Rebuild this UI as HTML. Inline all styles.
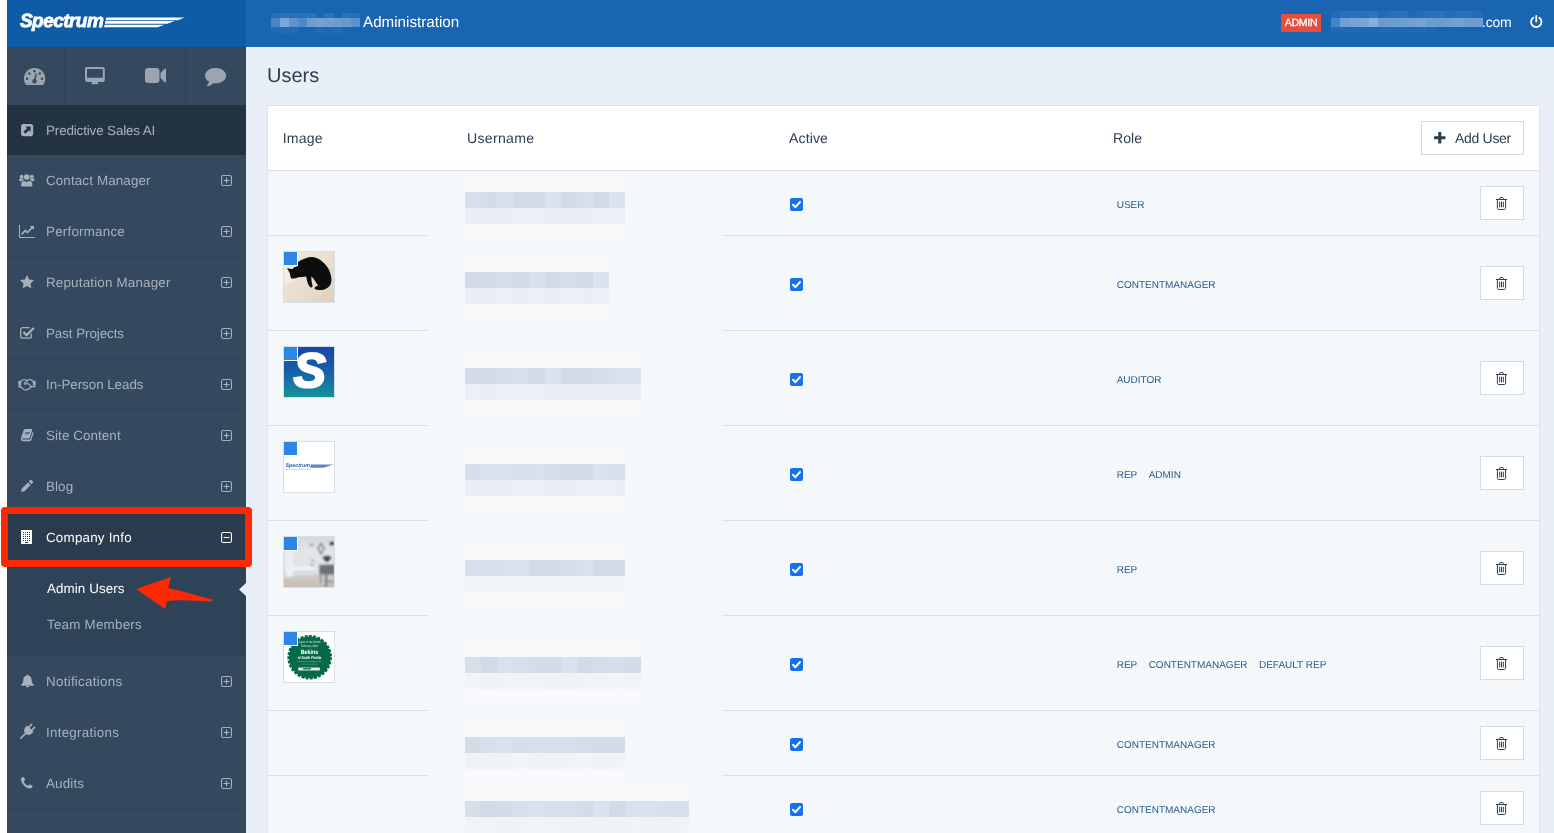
<!DOCTYPE html>
<html lang="en">
<head>
<meta charset="utf-8">
<title>Administration - Users</title>
<style>
*{box-sizing:border-box;margin:0;padding:0}
html,body{width:1554px;height:833px;overflow:hidden;background:#e9eff6}
body{position:relative;font-family:"Liberation Sans","DejaVu Sans",sans-serif;color:#2c3e50;font-size:14px;text-rendering:geometricPrecision}
.abs,.abs *{position:absolute}
body>.abs{will-change:transform}
svg{display:block;overflow:visible}
#strip{left:0;top:0;width:7px;height:833px;background:#fff}
#logo{left:7px;top:0;width:239px;height:47px;background:#0f5ba6}
#logo .w{left:13px;top:10.600px;font-size:19px;line-height:22px;font-weight:bold;font-style:italic;color:#fff;letter-spacing:-0.55px;-webkit-text-stroke:0.8px #fff}
#topbar{left:246px;top:0;width:1308px;height:47px;background:#1a65b1;color:#fff}
#topbar .title{left:117px;top:13.200px;font-size:15.2px;line-height:20px;color:#fff;white-space:nowrap}
#topbar .badge{left:1035px;top:14px;width:40px;height:18px;background:#e74c3c;color:#fff;font-size:10.5px;line-height:18px;text-align:center;letter-spacing:-0.3px;-webkit-text-stroke:.3px #fff}
#topbar .com{left:1236px;top:11.600px;font-size:14px;letter-spacing:-.2px;line-height:20px}
#side{left:7px;top:47px;width:239px;height:786px;background:#34495e}
#side .sep{top:0;width:1px;height:58px;background:#2f4256}
#psai{left:0;top:58px;width:239px;height:50px;background:#243342}
.mi{left:0;width:239px;height:51px;border-bottom:1px solid #2f4357;color:#a7b1bb;font-size:13.4px}
.mi .lbl,#psai .lbl{left:39px;top:17px;line-height:18px;white-space:nowrap;font-size:13.4px;color:#a7b1bb}
#subm{left:0;top:516px;width:239px;height:93px;background:#2f4358}
.sub{left:40px;color:#a7b1bb;font-size:13.4px;line-height:18px;white-space:nowrap}
#h1{left:267px;top:62.500px;font-size:20px;line-height:26px;color:#2c3e50}
#card{left:267px;top:105px;width:1273px;height:740px;background:#f4f8fb;border:1px solid #dbe3ea}
#thead{left:0;top:0;width:1271px;height:65px;background:#fff;border-bottom:1px solid #d5dee6}
.th{top:23px;font-size:14.100px;line-height:18px;color:#2c3e50;white-space:nowrap}
.row{left:0;width:1271px;border-bottom:1px solid #d9e2ea}
.role{left:848.700px;font-size:10px;line-height:14px;color:#285a8c;white-space:nowrap}
.abs .role span{position:static;margin-right:11.400px}
.del{left:1212px;width:44px;height:34px;background:#fff;border:1px solid #d3dce5}
.cb{left:522px;width:13px;height:13px;background:#1670ef;border-radius:2px}
.av{left:15px;width:52px;height:52px;border:1px solid #d7dfe6;background:#fff;overflow:hidden}
.av .sq{left:0px;top:0px;width:13px;height:13px;background:#2e86e4;border-right:1px solid #fff;border-bottom:1px solid #fff;width:14px;height:14px}
</style>
</head>
<body>
<div id="strip" class="abs"></div>
<div id="logo" class="abs"><div class="w">Spectrum</div><svg width="239" height="47" viewBox="0 0 239 47" style="left:0;top:0"><g fill="#fff"><path d="M99.300 17.600h78.200l-6.500 2.600H98.700z"/><path d="M98.500 20.900h69l-7 2.900H97.800z"/><path d="M97.700 24.800h59.800l-7 2.500H97.100z"/></g></svg></div>
<div id="topbar" class="abs"><div style="left:24.90px;top:18.100px;width:9.23px;height:9px;background:#4a86c6"></div><div style="left:24.90px;top:13.2px;width:9.23px;height:4.9px;background:#2570ba"></div><div style="left:24.90px;top:27.100px;width:9.23px;height:6.400px;background:#2169b5"></div><div style="left:33.83px;top:18.100px;width:9.23px;height:9px;background:#7ba7d6"></div><div style="left:33.83px;top:13.2px;width:9.23px;height:4.9px;background:#2872bb"></div><div style="left:33.83px;top:27.100px;width:9.23px;height:6.400px;background:#226bb6"></div><div style="left:42.76px;top:18.100px;width:9.23px;height:9px;background:#5e93cc"></div><div style="left:42.76px;top:13.2px;width:9.23px;height:4.9px;background:#2771bb"></div><div style="left:42.76px;top:27.100px;width:9.23px;height:6.400px;background:#216ab5"></div><div style="left:51.69px;top:18.100px;width:9.23px;height:9px;background:#4f8ac8"></div><div style="left:51.69px;top:13.2px;width:9.23px;height:4.9px;background:#2671ba"></div><div style="left:60.62px;top:18.100px;width:9.23px;height:9px;background:#6d9dd1"></div><div style="left:60.62px;top:13.2px;width:9.23px;height:4.9px;background:#2a73bc"></div><div style="left:69.55px;top:18.100px;width:9.23px;height:9px;background:#73a1d3"></div><div style="left:69.55px;top:27.100px;width:9.23px;height:6.400px;background:#226bb6"></div><div style="left:78.48px;top:18.100px;width:9.23px;height:9px;background:#6f9ed2"></div><div style="left:78.48px;top:13.2px;width:9.23px;height:4.9px;background:#2a73bc"></div><div style="left:78.48px;top:27.100px;width:9.23px;height:6.400px;background:#2068b4"></div><div style="left:87.41px;top:18.100px;width:9.23px;height:9px;background:#6c9cd1"></div><div style="left:87.41px;top:27.100px;width:9.23px;height:6.400px;background:#226bb6"></div><div style="left:96.34px;top:18.100px;width:9.23px;height:9px;background:#6a9bd0"></div><div style="left:96.34px;top:13.2px;width:9.23px;height:4.9px;background:#2871bb"></div><div style="left:105.27px;top:18.100px;width:9.23px;height:9px;background:#5b91cc"></div><div style="left:105.27px;top:13.2px;width:9.23px;height:4.9px;background:#2670ba"></div><div class="title">Administration</div><div class="badge">ADMIN</div><div style="left:1085.00px;top:18.100px;width:9.78px;height:9px;background:#3f87cd"></div><div style="left:1085.00px;top:10.8px;width:9.78px;height:7.3px;background:#236bb7"></div><div style="left:1085.00px;top:27.100px;width:9.78px;height:6.400px;background:#1f68b4"></div><div style="left:1094.48px;top:18.100px;width:9.78px;height:9px;background:#6fa0d3"></div><div style="left:1094.48px;top:10.8px;width:9.78px;height:7.3px;background:#2a70b9"></div><div style="left:1094.48px;top:27.100px;width:9.78px;height:6.400px;background:#2069b4"></div><div style="left:1103.96px;top:18.100px;width:9.78px;height:9px;background:#74a3d4"></div><div style="left:1103.96px;top:10.8px;width:9.78px;height:7.3px;background:#2c72ba"></div><div style="left:1103.96px;top:27.100px;width:9.78px;height:6.400px;background:#1f68b4"></div><div style="left:1113.44px;top:18.100px;width:9.78px;height:9px;background:#78a6d6"></div><div style="left:1113.44px;top:10.8px;width:9.78px;height:7.3px;background:#286fb8"></div><div style="left:1113.44px;top:27.100px;width:9.78px;height:6.400px;background:#2069b4"></div><div style="left:1122.92px;top:18.100px;width:9.78px;height:9px;background:#86afd9"></div><div style="left:1122.92px;top:10.8px;width:9.78px;height:7.3px;background:#3075bc"></div><div style="left:1122.92px;top:27.100px;width:9.78px;height:6.400px;background:#1f68b4"></div><div style="left:1132.40px;top:18.100px;width:9.78px;height:9px;background:#6a9cd1"></div><div style="left:1132.40px;top:10.8px;width:9.78px;height:7.3px;background:#246cb7"></div><div style="left:1132.40px;top:27.100px;width:9.78px;height:6.400px;background:#2069b4"></div><div style="left:1141.88px;top:18.100px;width:9.78px;height:9px;background:#6c9dd1"></div><div style="left:1141.88px;top:10.8px;width:9.78px;height:7.3px;background:#2a70b9"></div><div style="left:1141.88px;top:27.100px;width:9.78px;height:6.400px;background:#2069b4"></div><div style="left:1151.36px;top:18.100px;width:9.78px;height:9px;background:#6d9ed2"></div><div style="left:1151.36px;top:10.8px;width:9.78px;height:7.3px;background:#2b71ba"></div><div style="left:1151.36px;top:27.100px;width:9.78px;height:6.400px;background:#1f68b4"></div><div style="left:1160.84px;top:18.100px;width:9.78px;height:9px;background:#709fd2"></div><div style="left:1160.84px;top:10.8px;width:9.78px;height:7.3px;background:#226ab6"></div><div style="left:1160.84px;top:27.100px;width:9.78px;height:6.400px;background:#2069b4"></div><div style="left:1170.32px;top:18.100px;width:9.78px;height:9px;background:#75a3d4"></div><div style="left:1170.32px;top:10.8px;width:9.78px;height:7.3px;background:#266db8"></div><div style="left:1170.32px;top:27.100px;width:9.78px;height:6.400px;background:#2069b4"></div><div style="left:1179.80px;top:18.100px;width:9.78px;height:9px;background:#6b9dd1"></div><div style="left:1179.80px;top:10.8px;width:9.78px;height:7.3px;background:#296fb9"></div><div style="left:1179.80px;top:27.100px;width:9.78px;height:6.400px;background:#1f68b4"></div><div style="left:1189.28px;top:18.100px;width:9.78px;height:9px;background:#6a9cd1"></div><div style="left:1189.28px;top:10.8px;width:9.78px;height:7.3px;background:#2d72ba"></div><div style="left:1198.76px;top:18.100px;width:9.78px;height:9px;background:#6e9fd2"></div><div style="left:1198.76px;top:10.8px;width:9.78px;height:7.3px;background:#266db8"></div><div style="left:1208.24px;top:18.100px;width:9.78px;height:9px;background:#72a1d3"></div><div style="left:1208.24px;top:10.8px;width:9.78px;height:7.3px;background:#2a70b9"></div><div style="left:1217.72px;top:18.100px;width:9.78px;height:9px;background:#6b9dd1"></div><div style="left:1217.72px;top:10.8px;width:9.78px;height:7.3px;background:#2a70b9"></div><div style="left:1227.20px;top:18.100px;width:9.78px;height:9px;background:#6c9ed2"></div><div style="left:1227.20px;top:10.8px;width:9.78px;height:7.3px;background:#246cb7"></div><div class="com">.com</div><svg width="12.5" height="13.5" viewBox="0 0 12 13" style="left:1283.500px;top:14.500px;"><g fill="none" stroke="#fff" stroke-width="1.700" stroke-linecap="round"><path d="M6 .9v5.400"/><path d="M3.100 2.600a5 5 0 1 0 5.800 0"/></g></svg></div>
<div id="side" class="abs">
<div class="sep" style="left:57px"></div>
<div class="sep" style="left:118px"></div>
<div class="sep" style="left:178px"></div>
<svg width="22" height="17" viewBox="0 0 22 17" style="left:16.700px;top:20.700px;"><path fill="#9aa5b0" d="M10.600 0C4.700 0 0 4.700 0 10.600c0 2 .600 3.900 1.500 5.500.300.500.800.900 1.400.900h15.400c.600 0 1.100-.400 1.400-.900.900-1.600 1.500-3.500 1.500-5.500C21.200 4.700 16.500 0 10.600 0z"/><g fill="#34495e"><circle cx="3" cy="10.7" r="1.25"/><circle cx="5.3" cy="5.6" r="1.25"/><circle cx="10.5" cy="3.3" r="1.25"/><circle cx="15.8" cy="5.6" r="1.25"/><circle cx="18" cy="10.7" r="1.25"/><circle cx="10.500" cy="13.200" r="2.200"/><path d="M9.800 12.300 11.500 6.100c.100-.500.500-.600.900-.500.400.100.600.500.500.900l-1.700 6.200z"/></g></svg>
<svg width="20" height="18" viewBox="0 0 20 18" style="left:78.100px;top:20px;"><path fill="#9aa5b0" d="M1.800 0h16.200c1 0 1.800.8 1.800 1.800v11.300c0 1-.8 1.800-1.800 1.800h-5.300c0 .600.200 1.100.500 1.500.300.400.100.900-.400.900H7c-.500 0-.700-.500-.400-.900.300-.400.500-.900.500-1.500H1.800C.800 14.900 0 14.100 0 13.100V1.800C0 .800.800 0 1.800 0zm.600 2c-.200 0-.400.200-.400.400v8c0 .200.200.400.400.400h15c.200 0 .400-.200.400-.400v-8c0-.200-.200-.400-.400-.400z"/></svg>
<svg width="21" height="15" viewBox="0 0 21 15" style="left:137.900px;top:20.700px;"><path fill="#9aa5b0" d="M3 0h8.500c1.700 0 3 1.300 3 3v9c0 1.700-1.300 3-3 3H3c-1.700 0-3-1.300-3-3V3c0-1.700 1.300-3 3-3zm18 1.100v12.800c0 .600-.700.900-1.100.500L15.500 10V5l4.400-4.400c.400-.400 1.100-.100 1.100.500z"/></svg>
<svg width="22" height="19" viewBox="0 0 22 19" style="left:198.300px;top:20.700px;"><path fill="#9aa5b0" d="M21.200 7.700c0 4.200-4.700 7.600-10.600 7.600-.700 0-1.400-.100-2.100-.100-1.800 1.600-4.100 2.700-6.500 3.100-.300 0-.400-.300-.300-.500 1-1.100 2.100-2.600 2.300-4.300C1.500 12.100 0 10 0 7.700 0 3.500 4.700 0 10.600 0s10.600 3.500 10.600 7.700z"/></svg>
<div id="psai"><svg width="12.2" height="12.2" viewBox="0 0 13 13" style="left:14px;top:19px;"><path fill="#a7b1bb" d="M2.400 0h8.200C11.900 0 13 1.100 13 2.400v8.200c0 1.300-1.100 2.400-2.400 2.400H2.400C1.100 13 0 11.900 0 10.600V2.400C0 1.100 1.100 0 2.400 0z"/><path fill="#243342" d="M4.600 2.700h5.700v5.700L8.500 6.600 4.800 10.300 2.700 8.200l3.700-3.700z"/></svg><div class="lbl" style="letter-spacing:-0.13px">Predictive Sales AI</div></div>
<div class="mi" style="top:108px;"><svg width="15.5" height="14.3" viewBox="0 0 16 13" style="left:12.2px;top:17.6px;"><g fill="#a7b1bb"><circle cx="8" cy="3.200" r="2.900"/><path d="M3.500 13c-.800 0-1.300-.500-1.300-1.300 0-2.700 1-4.700 3-4.700.6.6 1.600 1.100 2.800 1.100S10.200 7.600 10.800 7c2 0 3 2 3 4.700 0 .8-.5 1.300-1.300 1.300z"/><circle cx="2.700" cy="2.900" r="1.900"/><circle cx="13.300" cy="2.900" r="1.900"/><path d="M1.300 7.600C.4 7.600 0 7.200 0 6.400 0 5.300.500 4.500 1.200 4.500c.4.400.9.600 1.500.6.500 0 1-.2 1.400-.5.200.7.600 1.300 1 1.800-1.100.1-1.900.5-2.500 1.200zM14.700 7.600c.9 0 1.300-.4 1.300-1.200 0-1.100-.5-1.900-1.200-1.900-.4.4-.9.600-1.500.6-.5 0-1-.2-1.400-.5-.2.7-.6 1.300-1 1.800 1.100.1 1.900.5 2.500 1.200z"/></g></svg><div class="lbl" style="letter-spacing:0.126px">Contact Manager</div><svg width="11" height="11" viewBox="0 0 11 11" style="left:214px;top:20px;"><g fill="none" stroke="#a7b1bb" stroke-width="1.100"><rect x=".55" y=".55" width="9.900" height="9.900" rx="1.800"/><path d="M2.600 5.500h5.800"/><path d="M5.500 2.600v5.800"/></g></svg></div>
<div class="mi" style="top:159px;"><svg width="16" height="13" viewBox="0 0 16 13" style="left:12px;top:19px;"><path fill="#a7b1bb" d="M1 0v12h15v1H0V0z"/><path fill="#a7b1bb" d="M15 1.700v3.500c0 .3-.3.400-.5.200l-1-1-5 5c-.1.100-.3.100-.4 0L6.300 7.600 3.200 10.700 2 9.500l4.100-4.100c.1-.1.300-.1.400 0l1.800 1.800 3.800-3.800-1-1c-.2-.2-.1-.5.200-.5h3.500c.1 0 .2.100.2.200z" transform="translate(0,-.8)"/></svg><div class="lbl" style="letter-spacing:0.213px">Performance</div><svg width="11" height="11" viewBox="0 0 11 11" style="left:214px;top:20px;"><g fill="none" stroke="#a7b1bb" stroke-width="1.100"><rect x=".55" y=".55" width="9.900" height="9.900" rx="1.800"/><path d="M2.600 5.500h5.800"/><path d="M5.500 2.600v5.800"/></g></svg></div>
<div class="mi" style="top:210px;"><svg width="14" height="13" viewBox="0 0 14 13" style="left:13px;top:18px;"><path fill="#a7b1bb" d="M7 0l2.100 4.400 4.900.7-3.500 3.400.8 4.800L7 11l-4.300 2.300.8-4.800L0 5.100l4.900-.7z"/></svg><div class="lbl" style="letter-spacing:0.181px">Reputation Manager</div><svg width="11" height="11" viewBox="0 0 11 11" style="left:214px;top:20px;"><g fill="none" stroke="#a7b1bb" stroke-width="1.100"><rect x=".55" y=".55" width="9.900" height="9.900" rx="1.800"/><path d="M2.600 5.500h5.800"/><path d="M5.500 2.600v5.800"/></g></svg></div>
<div class="mi" style="top:261px;"><svg width="15" height="13" viewBox="0 0 15 13" style="left:13.3px;top:17.7px;"><path fill="none" stroke="#a7b1bb" stroke-width="1.3" d="M11.300 7.500v2.700c0 1.100-.9 2-2 2H2.700c-1.100 0-2-.9-2-2V3.600c0-1.100.9-2 2-2h6.900"/><path fill="#a7b1bb" d="M4.200 5.200l2.400 2.400L13 1.200l1.600 1.600-8 8-4-4z"/></svg><div class="lbl" style="letter-spacing:-0.068px">Past Projects</div><svg width="11" height="11" viewBox="0 0 11 11" style="left:214px;top:20px;"><g fill="none" stroke="#a7b1bb" stroke-width="1.100"><rect x=".55" y=".55" width="9.900" height="9.900" rx="1.800"/><path d="M2.600 5.500h5.800"/><path d="M5.500 2.600v5.800"/></g></svg></div>
<div class="mi" style="top:312px;"><svg width="18" height="11.5" viewBox="0 0 18 12" style="left:11px;top:19.5px;"><g fill="none" stroke="#a7b1bb" stroke-width="1.200" stroke-linejoin="round" stroke-linecap="round"><path d="M0.700 2.300h2.200l2-1.500h3l1.300 1 1.500-1h2.600l2 1.500h2"/><path d="M0.700 8.300h1.800l3.800 3c.6.400 1.300.4 1.800 0l.6-.5 1 .3 1-.8.900-.2.700-1 .9-.8h2.100"/><path d="M9.200 1.800L6.300 4.300c-.3.700.3 1.300 1 1.200.8-.1 1.300-.6 2.100-1.200l4.400 3.800"/></g><rect fill="#a7b1bb" x="0" y="2.200" width="2.900" height="6.200"/><rect fill="#a7b1bb" x="15.100" y="2.200" width="2.900" height="6.200"/><rect fill="#34495e" x="1.100" y="6.300" width="1" height="1"/><rect fill="#34495e" x="15.900" y="6.300" width="1" height="1"/></svg><div class="lbl" style="letter-spacing:-0.057px">In-Person Leads</div><svg width="11" height="11" viewBox="0 0 11 11" style="left:214px;top:20px;"><g fill="none" stroke="#a7b1bb" stroke-width="1.100"><rect x=".55" y=".55" width="9.900" height="9.900" rx="1.800"/><path d="M2.600 5.500h5.800"/><path d="M5.500 2.600v5.800"/></g></svg></div>
<div class="mi" style="top:363px;"><svg width="13.7" height="12.2" viewBox="0 0 14 13" style="left:13px;top:19px;"><path fill="#a7b1bb" d="M13.800 3.300c.3.400.3.900.2 1.400l-2.200 7c-.2.700-.9 1.300-1.700 1.300H2.800C2 13 1.100 12.400.8 11.500c-.1-.4-.1-.7-.1-1 .100-.3.100-.5.100-.7 0-.2-.1-.3-.1-.5.100-.300.400-.600.500-1 .3-.6.700-1.600.8-2.200 0-.2-.1-.4 0-.6.1-.3.400-.5.500-.8.300-.5.700-1.500.7-2.100 0-.2-.1-.500 0-.700.100-.300.400-.400.600-.700C4.100.7 4.200 0 4.900.2l0 0c.200-.100.400-.100.600-.100h6c.4 0 .700.200.9.400.200.300.200.600.100 1L10.400 8.600c-.4 1.200-.6 1.400-1.600 1.400H2c-.1 0-.2 0-.3.100-.100.100-.100.200 0 .400.200.500.700.600 1.100.600h7.300c.300 0 .600-.200.700-.400l2.400-7.700c0-.2 0-.3 0-.5.200.1.400.200.500.400z"/><path fill="#34495e" d="M5.400 3.200h4.800l-.2.700H5.200zM4.900 4.800h4.800l-.2.700H4.700z"/></svg><div class="lbl" style="letter-spacing:0.083px">Site Content</div><svg width="11" height="11" viewBox="0 0 11 11" style="left:214px;top:20px;"><g fill="none" stroke="#a7b1bb" stroke-width="1.100"><rect x=".55" y=".55" width="9.900" height="9.900" rx="1.800"/><path d="M2.600 5.500h5.800"/><path d="M5.500 2.600v5.800"/></g></svg></div>
<div class="mi" style="top:414px;"><svg width="12.2" height="12" viewBox="0 0 13 13" style="left:13.8px;top:18.8px;"><path fill="#a7b1bb" d="M0 13l.8-3.700 6.700-6.700 2.900 2.900-6.700 6.700zM8.300 1.800L9.700.4c.5-.5 1.300-.5 1.800 0l1.100 1.100c.5.5.5 1.300 0 1.800l-1.400 1.400z"/></svg><div class="lbl" style="letter-spacing:0.097px">Blog</div><svg width="11" height="11" viewBox="0 0 11 11" style="left:214px;top:20px;"><g fill="none" stroke="#a7b1bb" stroke-width="1.100"><rect x=".55" y=".55" width="9.900" height="9.900" rx="1.800"/><path d="M2.600 5.500h5.800"/><path d="M5.500 2.600v5.800"/></g></svg></div>
<div class="mi" style="top:465px;background:#2b3b4e;color:#fff;"><svg width="11" height="14" viewBox="0 0 11 14" style="left:14px;top:18px;shape-rendering:crispEdges;"><path fill="#fff" d="M.5 0h10c.3 0 .5.2.5.5V14H0V.5C0 .2.200 0 .5 0z"/><rect x="2" y="2" width="1" height="1" fill="#2b3b4e"/><rect x="4" y="2" width="1" height="1" fill="#2b3b4e"/><rect x="6" y="2" width="1" height="1" fill="#2b3b4e"/><rect x="8" y="2" width="1" height="1" fill="#2b3b4e"/><rect x="2" y="4" width="1" height="1" fill="#2b3b4e"/><rect x="4" y="4" width="1" height="1" fill="#2b3b4e"/><rect x="6" y="4" width="1" height="1" fill="#2b3b4e"/><rect x="8" y="4" width="1" height="1" fill="#2b3b4e"/><rect x="2" y="6" width="1" height="1" fill="#2b3b4e"/><rect x="4" y="6" width="1" height="1" fill="#2b3b4e"/><rect x="6" y="6" width="1" height="1" fill="#2b3b4e"/><rect x="8" y="6" width="1" height="1" fill="#2b3b4e"/><rect x="2" y="8" width="1" height="1" fill="#2b3b4e"/><rect x="4" y="8" width="1" height="1" fill="#2b3b4e"/><rect x="6" y="8" width="1" height="1" fill="#2b3b4e"/><rect x="8" y="8" width="1" height="1" fill="#2b3b4e"/><rect x="2" y="10" width="1" height="1" fill="#2b3b4e"/><rect x="4" y="10" width="1" height="1" fill="#2b3b4e"/><rect x="6" y="10" width="1" height="1" fill="#2b3b4e"/><rect x="8" y="10" width="1" height="1" fill="#2b3b4e"/><rect x="4" y="11.500" width="3" height="1.500" fill="#2b3b4e"/></svg><div class="lbl" style="letter-spacing:0.202px;color:#fff">Company Info</div><svg width="11" height="11" viewBox="0 0 11 11" style="left:214px;top:20px;"><g fill="none" stroke="#fff" stroke-width="1.100"><rect x=".55" y=".55" width="9.900" height="9.900" rx="1.800"/><path d="M2.600 5.500h5.800"/></g></svg></div>
<div class="mi" style="top:609px;"><svg width="13" height="14" viewBox="0 0 14 14" style="left:13.7px;top:18px;"><path fill="#a7b1bb" d="M7 0c.5 0 .9.400.9.900v.3c2.200.4 3.600 2.200 3.600 4.500 0 3.300 1.300 4.600 2.300 5.400v.900H.200v-.900C1.200 10.300 2.500 9 2.500 5.700c0-2.300 1.400-4.100 3.600-4.500V.900C6.100.400 6.500 0 7 0zM5.300 12.500h3.400c0 .800-.700 1.500-1.700 1.500s-1.700-.700-1.700-1.500z"/></svg><div class="lbl" style="letter-spacing:0.266px">Notifications</div><svg width="11" height="11" viewBox="0 0 11 11" style="left:214px;top:20px;"><g fill="none" stroke="#a7b1bb" stroke-width="1.100"><rect x=".55" y=".55" width="9.900" height="9.900" rx="1.800"/><path d="M2.600 5.500h5.800"/><path d="M5.500 2.600v5.800"/></g></svg></div>
<div class="mi" style="top:660px;"><svg width="15" height="15" viewBox="0 0 15 15" style="left:12.5px;top:17px;"><g fill="#a7b1bb" transform="translate(7.300 7.700) rotate(45)"><rect x="-2.900" y="-9" width="1.700" height="5" rx=".8"/><rect x="1.200" y="-9" width="1.700" height="5" rx=".8"/><path d="M-4.500-4.400h9v2.600a4.500 4.500 0 0 1-9 0z"/><rect x="-.8" y="2" width="1.600" height="8"/></g></svg><div class="lbl" style="letter-spacing:0.259px">Integrations</div><svg width="11" height="11" viewBox="0 0 11 11" style="left:214px;top:20px;"><g fill="none" stroke="#a7b1bb" stroke-width="1.100"><rect x=".55" y=".55" width="9.900" height="9.900" rx="1.800"/><path d="M2.600 5.500h5.800"/><path d="M5.500 2.600v5.800"/></g></svg></div>
<div class="mi" style="top:711px;"><svg width="11.5" height="11.5" viewBox="0 0 1408 1408" style="left:14.2px;top:18.8px;"><path fill="#a7b1bb" d="M1408 1112q0 27-10 70.500t-21 68.500q-21 50-122 106-94 51-186 51-27 0-53-3.500t-57.500-12.500-47-14.500-55.500-20.500-49-18q-98-35-175-83-127-79-264-216t-216-264q-48-77-83-175-3-9-18-49t-20.500-55.500-14.500-47-12.500-57.500-3.500-53q0-92 51-186 56-101 106-122 25-11 68.500-21t70.500-10q14 0 21 3 18 6 53 76 11 19 30 54t35 63.500 31 53.500q3 4 17.500 25t21.500 35.500 7 28.500q0 20-28.500 50t-62 55-62 53-28.500 46q0 9 5 22.500t8.500 20.500 14 24 11.500 19q76 137 174 235t235 174q2 1 19 11.500t24 14 20.500 8.500 22.500 5q18 0 46-28.500t53-62 55-62 50-28.500q14 0 28.500 7t35.500 21.500 25 17.500q25 15 53.500 31t63.500 35 54 30q70 35 76 53 3 7 3 21z"/></svg><div class="lbl" style="letter-spacing:0.147px">Audits</div><svg width="11" height="11" viewBox="0 0 11 11" style="left:214px;top:20px;"><g fill="none" stroke="#a7b1bb" stroke-width="1.100"><rect x=".55" y=".55" width="9.900" height="9.900" rx="1.800"/><path d="M2.600 5.500h5.800"/><path d="M5.500 2.600v5.800"/></g></svg></div>
<div id="subm"></div>
<div class="sub" style="top:533px;color:#fff;letter-spacing:.09px">Admin Users</div>
<div class="sub" style="top:569px;letter-spacing:.22px">Team Members</div>
<svg width="7" height="13" viewBox="0 0 7 13" style="left:232px;top:535.500px"><path fill="#e9eff6" d="M7 0v13L0 6.500z"/></svg>
</div>
<div class="abs" style="left:1px;top:507px;width:251px;height:60px;border:7px solid #fb2a05;border-radius:4px"></div>
<svg width="80" height="34" viewBox="0 0 80 34" style="position:absolute;left:136px;top:577px"><path fill="#fb2a05" d="M0 12L35 0 32 11c14 3 30 8 44 11.500 1.200.500.800 2-.400 2C61 24 44 22 31 24l-2 8z"/></svg>
<div id="h1" class="abs">Users</div>
<div id="card" class="abs"><div id="thead"><div class="th" style="left:14.700px;letter-spacing:.2px">Image</div><div class="th" style="left:199px;letter-spacing:.3px">Username</div><div class="th" style="left:521px;letter-spacing:.1px">Active</div><div class="th" style="left:845px">Role</div><div style="left:1153px;top:15px;width:103px;height:34px;border:1px solid #d3dce5;background:#fff"><svg width="11.5" height="11.5" viewBox="0 0 11.500 11.500" style="left:12px;top:10px;"><path fill="#2c3e50" d="M4.700 0h2.100c.300 0 .500.200.500.500v3.700h3.700c.300 0 .500.200.500.500v2.100c0 .300-.200.500-.500.500H7.300v3.700c0 .300-.200.500-.500.500H4.700c-.300 0-.500-.200-.500-.500V7.300H.5c-.300 0-.500-.200-.500-.500V4.700c0-.300.200-.500.500-.500h3.700V.5c0-.300.200-.500.500-.500z"/></svg><div style="left:33px;top:7px;font-size:14px;letter-spacing:-0.300px;line-height:18px;white-space:nowrap;color:#2c3e50">Add User</div></div></div>
<div class="row" style="top:65px;height:65px">
<div class="cb" style="top:27px"><svg width="13" height="13" viewBox="0 0 13 13" style=""><path fill="none" stroke="#fff" stroke-width="2" stroke-linecap="round" stroke-linejoin="round" d="M3 6.800l2.400 2.400L10 4"/></svg></div>
<div class="role" style="top:27.6px"><span>USER</span></div>
<div class="del" style="top:15px"><svg width="11" height="13" viewBox="0 0 11 13" style="left:15.200px;top:9.900px;"><g fill="none" stroke="#2c3e50" stroke-width="1"><path d="M0 2.500h11M3.700 2.300V1.200c0-.4.300-.7.700-.7h2.200c.4 0 .7.300.7.700v1.100"/><path d="M1.400 2.700v8.600c0 .7.500 1.200 1.200 1.200h5.800c.7 0 1.200-.5 1.200-1.200V2.700"/><path d="M3.700 4.700v5.600M5.500 4.700v5.600M7.300 4.700v5.600"/></g></svg></div>
</div>
<div class="row" style="top:130px;height:95px">
<div class="av" style="top:15px"><svg width="50" height="50" viewBox="0 0 50 50" style=""><defs><linearGradient id="fl" x1="0" y1="0" x2="1" y2="1"><stop offset="0" stop-color="#efe6da"/><stop offset=".5" stop-color="#eadfd0"/><stop offset="1" stop-color="#e0d0bd"/></linearGradient><filter id="bl"><feGaussianBlur stdDeviation=".5"/></filter></defs><rect width="50" height="50" fill="url(#fl)"/><path fill="#f3eee8" opacity=".8" d="M0 14h9l3 14-12 6z"/><path filter="url(#bl)" fill="#0c0c10" d="M14 10C18 7 24 5 28 5c6 0 12 5 16 11 3 5 4 11 3 15-1 4-5 6.500-9 7-3 .300-6.500 0-7.500-1.500 0-1.500 1.500-2 3.500-3-2-3-4-6.500-6.500-9l-.200 0c0 3.500.500 6.500 1.200 9 .300 1.500-1 2.300-2.200 1.700-2.300-2.200-3.500-6.200-4-10.700-2.800.300-5.300.500-7.800.800-2.500 1.200-5 1.700-7.200 1.300-1-1.600-1-3.600-1.500-5.600C5 19.500 4 18 3 16.400c2 0 4 .400 5.500.600C10 15 12 14.500 14 14z"/></svg><div class="sq"></div></div>
<div class="cb" style="top:42px"><svg width="13" height="13" viewBox="0 0 13 13" style=""><path fill="none" stroke="#fff" stroke-width="2" stroke-linecap="round" stroke-linejoin="round" d="M3 6.800l2.400 2.400L10 4"/></svg></div>
<div class="role" style="top:42.6px"><span>CONTENTMANAGER</span></div>
<div class="del" style="top:30px"><svg width="11" height="13" viewBox="0 0 11 13" style="left:15.200px;top:9.900px;"><g fill="none" stroke="#2c3e50" stroke-width="1"><path d="M0 2.500h11M3.700 2.300V1.200c0-.4.300-.7.700-.7h2.200c.4 0 .7.300.7.700v1.100"/><path d="M1.400 2.700v8.600c0 .7.500 1.200 1.200 1.200h5.800c.7 0 1.200-.5 1.200-1.200V2.700"/><path d="M3.700 4.700v5.600M5.500 4.700v5.600M7.300 4.700v5.600"/></g></svg></div>
</div>
<div class="row" style="top:225px;height:95px">
<div class="av" style="top:15px"><div style="left:0;top:0;width:50px;height:50px;background:linear-gradient(#1947a6,#1660a8 50%,#147f9f 80%,#15919b)"></div><div style="left:9.500px;top:-3.200px;font-size:48.500px;line-height:54px;font-weight:bold;font-style:italic;color:#fff;-webkit-text-stroke:2.200px #fff">S</div><div class="sq"></div></div>
<div class="cb" style="top:42px"><svg width="13" height="13" viewBox="0 0 13 13" style=""><path fill="none" stroke="#fff" stroke-width="2" stroke-linecap="round" stroke-linejoin="round" d="M3 6.800l2.400 2.400L10 4"/></svg></div>
<div class="role" style="top:42.6px"><span>AUDITOR</span></div>
<div class="del" style="top:30px"><svg width="11" height="13" viewBox="0 0 11 13" style="left:15.200px;top:9.900px;"><g fill="none" stroke="#2c3e50" stroke-width="1"><path d="M0 2.500h11M3.700 2.300V1.200c0-.4.300-.7.700-.7h2.200c.4 0 .7.300.7.700v1.100"/><path d="M1.400 2.700v8.600c0 .7.500 1.200 1.200 1.200h5.800c.7 0 1.200-.5 1.200-1.200V2.700"/><path d="M3.700 4.700v5.600M5.500 4.700v5.600M7.300 4.700v5.600"/></g></svg></div>
</div>
<div class="row" style="top:320px;height:95px">
<div class="av" style="top:15px"><div style="left:1.500px;top:21px;font-size:5.300px;line-height:7px;font-weight:bold;font-style:italic;color:#2255a8;white-space:nowrap">Spectrum</div><svg width="50" height="50" viewBox="0 0 50 50" style=""><path fill="#5d86c8" d="M26.700 22.600H49l-5.500 1.800-4 1.300H26.300z"/><rect x="1.500" y="26.700" width="25" height="1" fill="#c5cfdf"/></svg><div class="sq"></div></div>
<div class="cb" style="top:42px"><svg width="13" height="13" viewBox="0 0 13 13" style=""><path fill="none" stroke="#fff" stroke-width="2" stroke-linecap="round" stroke-linejoin="round" d="M3 6.800l2.400 2.400L10 4"/></svg></div>
<div class="role" style="top:42.6px"><span>REP</span><span>ADMIN</span></div>
<div class="del" style="top:30px"><svg width="11" height="13" viewBox="0 0 11 13" style="left:15.200px;top:9.900px;"><g fill="none" stroke="#2c3e50" stroke-width="1"><path d="M0 2.500h11M3.700 2.300V1.200c0-.4.300-.7.700-.7h2.200c.4 0 .7.300.7.700v1.100"/><path d="M1.400 2.700v8.600c0 .7.500 1.200 1.200 1.200h5.800c.7 0 1.200-.5 1.200-1.200V2.700"/><path d="M3.700 4.700v5.600M5.500 4.700v5.600M7.300 4.700v5.600"/></g></svg></div>
</div>
<div class="row" style="top:415px;height:95px">
<div class="av" style="top:15px"><div style="left:0;top:0;width:50px;height:50px;background:linear-gradient(#d5d8dc,#e3e6e9 30%,#e1e3e6 72%,#cfcac4 78%,#c6beb6)"></div><svg width="50" height="50" viewBox="0 0 50 50" style=""><defs><filter id="b2"><feGaussianBlur stdDeviation=".8"/></filter></defs><g filter="url(#b2)"><rect x="2" y="14" width="7" height="26" fill="#edf0f3"/><rect x="9" y="30" width="22" height="3" fill="#f4f6f8"/><rect x="9" y="33" width="22" height="5" fill="#dadde0"/><rect x="35.500" y="26.500" width="15" height="11" fill="#6d7075"/><rect x="35.500" y="26" width="15" height="1.500" fill="#e9ebee"/><rect x="36" y="37" width="1.200" height="9" fill="#7b7d81"/><rect x="41.500" y="37" width="1.500" height="13" fill="#5f6266"/><rect x="42" y="44" width="8" height="1" fill="#6d6f73"/><path d="M37 6.500l3 5-3 5.500-3-5.500z" fill="none" stroke="#6e7378" stroke-width="1.300"/><ellipse cx="43" cy="21" rx="4" ry="2.300" fill="#3f5641"/><rect x="41.500" y="22" width="3" height="3" fill="#33363a"/><rect x="26" y="7" width="3" height="1.500" fill="#70747a"/><circle cx="28.500" cy="23.500" r="1.100" fill="#7c8086"/><rect x="26.500" y="27.500" width="3" height="1.500" fill="#8d9197"/><rect x="46" y="5" width="4" height="3" fill="#2b2d30"/></g></svg><div class="sq"></div></div>
<div class="cb" style="top:42px"><svg width="13" height="13" viewBox="0 0 13 13" style=""><path fill="none" stroke="#fff" stroke-width="2" stroke-linecap="round" stroke-linejoin="round" d="M3 6.800l2.400 2.400L10 4"/></svg></div>
<div class="role" style="top:42.6px"><span>REP</span></div>
<div class="del" style="top:30px"><svg width="11" height="13" viewBox="0 0 11 13" style="left:15.200px;top:9.900px;"><g fill="none" stroke="#2c3e50" stroke-width="1"><path d="M0 2.500h11M3.700 2.300V1.200c0-.4.300-.7.700-.7h2.200c.4 0 .7.300.7.700v1.100"/><path d="M1.400 2.700v8.600c0 .7.500 1.200 1.200 1.200h5.800c.7 0 1.200-.5 1.200-1.200V2.700"/><path d="M3.700 4.700v5.600M5.500 4.700v5.600M7.300 4.700v5.600"/></g></svg></div>
</div>
<div class="row" style="top:510px;height:95px">
<div class="av" style="top:15px"><svg width="50" height="50" viewBox="0 0 50 50" style=""><circle cx="25.700" cy="25.300" r="20.800" fill="#066a48" stroke="#066a48" stroke-width="3" stroke-dasharray="2.900 1.300"/><rect x="14" y="35.500" width="22" height="3" rx="1" fill="#e6e8df"/><rect x="19" y="36" width="8" height="1.500" fill="#2f7d5c"/><rect x="13.500" y="29.300" width="24" height=".6" fill="#6ba58d"/><rect x="18" y="31.800" width="15" height=".6" fill="#5c9b82"/></svg><div style="left:5px;top:8.300px;width:41px;text-align:center;font-size:3.200px;line-height:4px;color:#d8e8e0;white-space:nowrap;transform:scaleX(.82)">Agent of the Month</div><div style="left:5px;top:12.300px;width:41px;text-align:center;font-size:3.200px;line-height:4px;color:#d8e8e0;white-space:nowrap;transform:scaleX(.82)">February 2024</div><div style="left:5px;top:16.500px;width:41px;text-align:center;font-size:6.200px;line-height:7px;font-weight:bold;color:#fff;white-space:nowrap;transform:scaleX(.87)">Bekins</div><div style="left:5px;top:23px;width:41px;text-align:center;font-size:4.100px;line-height:5px;font-weight:bold;font-style:italic;color:#fff;white-space:nowrap;transform:scaleX(.75)">of South Florida</div><div class="sq"></div></div>
<div class="cb" style="top:42px"><svg width="13" height="13" viewBox="0 0 13 13" style=""><path fill="none" stroke="#fff" stroke-width="2" stroke-linecap="round" stroke-linejoin="round" d="M3 6.800l2.400 2.400L10 4"/></svg></div>
<div class="role" style="top:42.6px"><span>REP</span><span>CONTENTMANAGER</span><span>DEFAULT REP</span></div>
<div class="del" style="top:30px"><svg width="11" height="13" viewBox="0 0 11 13" style="left:15.200px;top:9.900px;"><g fill="none" stroke="#2c3e50" stroke-width="1"><path d="M0 2.500h11M3.700 2.300V1.200c0-.4.300-.7.700-.7h2.200c.4 0 .7.300.7.700v1.100"/><path d="M1.400 2.700v8.600c0 .7.500 1.200 1.200 1.200h5.800c.7 0 1.200-.5 1.200-1.200V2.700"/><path d="M3.700 4.700v5.600M5.500 4.700v5.600M7.300 4.700v5.600"/></g></svg></div>
</div>
<div class="row" style="top:605px;height:65px">
<div class="cb" style="top:27px"><svg width="13" height="13" viewBox="0 0 13 13" style=""><path fill="none" stroke="#fff" stroke-width="2" stroke-linecap="round" stroke-linejoin="round" d="M3 6.800l2.400 2.400L10 4"/></svg></div>
<div class="role" style="top:27.6px"><span>CONTENTMANAGER</span></div>
<div class="del" style="top:15px"><svg width="11" height="13" viewBox="0 0 11 13" style="left:15.200px;top:9.900px;"><g fill="none" stroke="#2c3e50" stroke-width="1"><path d="M0 2.500h11M3.700 2.300V1.200c0-.4.300-.7.700-.7h2.200c.4 0 .7.300.7.700v1.100"/><path d="M1.400 2.700v8.600c0 .7.500 1.200 1.200 1.200h5.800c.7 0 1.200-.5 1.200-1.200V2.700"/><path d="M3.700 4.700v5.600M5.500 4.700v5.600M7.300 4.700v5.600"/></g></svg></div>
</div>
<div class="row" style="top:670px;height:65px">
<div class="cb" style="top:27px"><svg width="13" height="13" viewBox="0 0 13 13" style=""><path fill="none" stroke="#fff" stroke-width="2" stroke-linecap="round" stroke-linejoin="round" d="M3 6.800l2.400 2.400L10 4"/></svg></div>
<div class="role" style="top:27.6px"><span>CONTENTMANAGER</span></div>
<div class="del" style="top:15px"><svg width="11" height="13" viewBox="0 0 11 13" style="left:15.200px;top:9.900px;"><g fill="none" stroke="#2c3e50" stroke-width="1"><path d="M0 2.500h11M3.700 2.300V1.200c0-.4.300-.7.700-.7h2.200c.4 0 .7.300.7.700v1.100"/><path d="M1.400 2.700v8.600c0 .7.500 1.200 1.200 1.200h5.800c.7 0 1.200-.5 1.200-1.200V2.700"/><path d="M3.700 4.700v5.600M5.500 4.700v5.600M7.300 4.700v5.600"/></g></svg></div>
</div>
<div style="left:160px;top:74px;width:294px;height:680px;background:#f5f8fb"></div>
<div style="left:197px;top:70px;width:160px;height:16px;background:#f7f9fb"></div>
<div style="left:197px;top:118px;width:160px;height:16px;background:#f7f9fb"></div>
<div style="left:197px;top:86px;width:16px;height:16px;background:#d5e0ea"></div><div style="left:213px;top:86px;width:16px;height:16px;background:#d2dde7"></div><div style="left:229px;top:86px;width:16px;height:16px;background:#d6e1eb"></div><div style="left:245px;top:86px;width:16px;height:16px;background:#d0dbe5"></div><div style="left:261px;top:86px;width:16px;height:16px;background:#d1dce6"></div><div style="left:277px;top:86px;width:16px;height:16px;background:#d8e3ed"></div><div style="left:293px;top:86px;width:16px;height:16px;background:#d1dce6"></div><div style="left:309px;top:86px;width:16px;height:16px;background:#d5e0ea"></div><div style="left:325px;top:86px;width:16px;height:16px;background:#d0dbe5"></div><div style="left:341px;top:86px;width:16px;height:16px;background:#d8e3ed"></div>
<div style="left:197px;top:102px;width:16px;height:16px;background:#e9eef4"></div><div style="left:213px;top:102px;width:16px;height:16px;background:#e8edf3"></div><div style="left:229px;top:102px;width:16px;height:16px;background:#e8edf3"></div><div style="left:245px;top:102px;width:16px;height:16px;background:#ebf0f6"></div><div style="left:261px;top:102px;width:16px;height:16px;background:#ebf0f6"></div><div style="left:277px;top:102px;width:16px;height:16px;background:#e8edf3"></div><div style="left:293px;top:102px;width:16px;height:16px;background:#e9eef4"></div><div style="left:309px;top:102px;width:16px;height:16px;background:#e8edf3"></div><div style="left:325px;top:102px;width:16px;height:16px;background:#ecf1f7"></div><div style="left:341px;top:102px;width:16px;height:16px;background:#ebf0f6"></div>
<div style="left:197px;top:150.3px;width:144px;height:16px;background:#f7f9fb"></div>
<div style="left:197px;top:198.3px;width:144px;height:16px;background:#f7f9fb"></div>
<div style="left:197px;top:166.3px;width:16px;height:16px;background:#d0dbe5"></div><div style="left:213px;top:166.3px;width:16px;height:16px;background:#d1dce6"></div><div style="left:229px;top:166.3px;width:16px;height:16px;background:#d3dee8"></div><div style="left:245px;top:166.3px;width:16px;height:16px;background:#d0dbe5"></div><div style="left:261px;top:166.3px;width:16px;height:16px;background:#d6e1eb"></div><div style="left:277px;top:166.3px;width:16px;height:16px;background:#d0dbe5"></div><div style="left:293px;top:166.3px;width:16px;height:16px;background:#d3dee8"></div><div style="left:309px;top:166.3px;width:16px;height:16px;background:#d0dbe5"></div><div style="left:325px;top:166.3px;width:16px;height:16px;background:#d8e3ed"></div>
<div style="left:197px;top:182.3px;width:16px;height:16px;background:#e9eef4"></div><div style="left:213px;top:182.3px;width:16px;height:16px;background:#eaeff5"></div><div style="left:229px;top:182.3px;width:16px;height:16px;background:#ebf0f6"></div><div style="left:245px;top:182.3px;width:16px;height:16px;background:#e9eef4"></div><div style="left:261px;top:182.3px;width:16px;height:16px;background:#ecf1f7"></div><div style="left:277px;top:182.3px;width:16px;height:16px;background:#e8edf3"></div><div style="left:293px;top:182.3px;width:16px;height:16px;background:#ecf1f7"></div><div style="left:309px;top:182.3px;width:16px;height:16px;background:#eaeff5"></div><div style="left:325px;top:182.3px;width:16px;height:16px;background:#ecf1f7"></div>
<div style="left:197px;top:246.39999999999998px;width:176px;height:16px;background:#f7f9fb"></div>
<div style="left:197px;top:294.4px;width:176px;height:16px;background:#f7f9fb"></div>
<div style="left:197px;top:262.4px;width:16px;height:16px;background:#d2dde7"></div><div style="left:213px;top:262.4px;width:16px;height:16px;background:#d1dce6"></div><div style="left:229px;top:262.4px;width:16px;height:16px;background:#d3dee8"></div><div style="left:245px;top:262.4px;width:16px;height:16px;background:#d5e0ea"></div><div style="left:261px;top:262.4px;width:16px;height:16px;background:#d1dce6"></div><div style="left:277px;top:262.4px;width:16px;height:16px;background:#d8e3ed"></div><div style="left:293px;top:262.4px;width:16px;height:16px;background:#d1dce6"></div><div style="left:309px;top:262.4px;width:16px;height:16px;background:#d0dbe5"></div><div style="left:325px;top:262.4px;width:16px;height:16px;background:#d3dee8"></div><div style="left:341px;top:262.4px;width:16px;height:16px;background:#d7e2ec"></div><div style="left:357px;top:262.4px;width:16px;height:16px;background:#d8e3ed"></div>
<div style="left:197px;top:278.4px;width:16px;height:16px;background:#ebf0f6"></div><div style="left:213px;top:278.4px;width:16px;height:16px;background:#eaeff5"></div><div style="left:229px;top:278.4px;width:16px;height:16px;background:#ebf0f6"></div><div style="left:245px;top:278.4px;width:16px;height:16px;background:#ecf1f7"></div><div style="left:261px;top:278.4px;width:16px;height:16px;background:#ebf0f6"></div><div style="left:277px;top:278.4px;width:16px;height:16px;background:#eaeff5"></div><div style="left:293px;top:278.4px;width:16px;height:16px;background:#eaeff5"></div><div style="left:309px;top:278.4px;width:16px;height:16px;background:#e9eef4"></div><div style="left:325px;top:278.4px;width:16px;height:16px;background:#e9eef4"></div><div style="left:341px;top:278.4px;width:16px;height:16px;background:#e9eef4"></div><div style="left:357px;top:278.4px;width:16px;height:16px;background:#e8edf3"></div>
<div style="left:197px;top:342.4px;width:160px;height:16px;background:#f7f9fb"></div>
<div style="left:197px;top:390.4px;width:160px;height:16px;background:#f7f9fb"></div>
<div style="left:197px;top:358.4px;width:16px;height:16px;background:#d4dfe9"></div><div style="left:213px;top:358.4px;width:16px;height:16px;background:#d8e3ed"></div><div style="left:229px;top:358.4px;width:16px;height:16px;background:#d7e2ec"></div><div style="left:245px;top:358.4px;width:16px;height:16px;background:#d5e0ea"></div><div style="left:261px;top:358.4px;width:16px;height:16px;background:#d7e2ec"></div><div style="left:277px;top:358.4px;width:16px;height:16px;background:#d4dfe9"></div><div style="left:293px;top:358.4px;width:16px;height:16px;background:#d1dce6"></div><div style="left:309px;top:358.4px;width:16px;height:16px;background:#d1dce6"></div><div style="left:325px;top:358.4px;width:16px;height:16px;background:#d8e3ed"></div><div style="left:341px;top:358.4px;width:16px;height:16px;background:#d6e1eb"></div>
<div style="left:197px;top:374.4px;width:16px;height:16px;background:#e9eef4"></div><div style="left:213px;top:374.4px;width:16px;height:16px;background:#eaeff5"></div><div style="left:229px;top:374.4px;width:16px;height:16px;background:#e9eef4"></div><div style="left:245px;top:374.4px;width:16px;height:16px;background:#ebf0f6"></div><div style="left:261px;top:374.4px;width:16px;height:16px;background:#ebf0f6"></div><div style="left:277px;top:374.4px;width:16px;height:16px;background:#e8edf3"></div><div style="left:293px;top:374.4px;width:16px;height:16px;background:#e8edf3"></div><div style="left:309px;top:374.4px;width:16px;height:16px;background:#ecf1f7"></div><div style="left:325px;top:374.4px;width:16px;height:16px;background:#ecf1f7"></div><div style="left:341px;top:374.4px;width:16px;height:16px;background:#eaeff5"></div>
<div style="left:197px;top:438.4px;width:160px;height:16px;background:#f7f9fb"></div>
<div style="left:197px;top:486.4px;width:160px;height:16px;background:#f7f9fb"></div>
<div style="left:197px;top:454.4px;width:16px;height:16px;background:#d5e0ea"></div><div style="left:213px;top:454.4px;width:16px;height:16px;background:#d5e0ea"></div><div style="left:229px;top:454.4px;width:16px;height:16px;background:#d7e2ec"></div><div style="left:245px;top:454.4px;width:16px;height:16px;background:#d7e2ec"></div><div style="left:261px;top:454.4px;width:16px;height:16px;background:#d1dce6"></div><div style="left:277px;top:454.4px;width:16px;height:16px;background:#d1dce6"></div><div style="left:293px;top:454.4px;width:16px;height:16px;background:#d4dfe9"></div><div style="left:309px;top:454.4px;width:16px;height:16px;background:#d7e2ec"></div><div style="left:325px;top:454.4px;width:16px;height:16px;background:#d1dce6"></div><div style="left:341px;top:454.4px;width:16px;height:16px;background:#d0dbe5"></div>
<div style="left:197px;top:470.4px;width:16px;height:16px;background:#f1f5f9"></div><div style="left:213px;top:470.4px;width:16px;height:16px;background:#f1f5f9"></div><div style="left:229px;top:470.4px;width:16px;height:16px;background:#f0f4f8"></div><div style="left:245px;top:470.4px;width:16px;height:16px;background:#f1f5f9"></div><div style="left:261px;top:470.4px;width:16px;height:16px;background:#f1f5f9"></div><div style="left:277px;top:470.4px;width:16px;height:16px;background:#f1f5f9"></div><div style="left:293px;top:470.4px;width:16px;height:16px;background:#f0f4f8"></div><div style="left:309px;top:470.4px;width:16px;height:16px;background:#f0f4f8"></div><div style="left:325px;top:470.4px;width:16px;height:16px;background:#f1f5f9"></div><div style="left:341px;top:470.4px;width:16px;height:16px;background:#f0f4f8"></div>
<div style="left:197px;top:534.7px;width:176px;height:16px;background:#f7f9fb"></div>
<div style="left:197px;top:582.7px;width:176px;height:16px;background:#f7f9fb"></div>
<div style="left:197px;top:550.7px;width:16px;height:16px;background:#d5e0ea"></div><div style="left:213px;top:550.7px;width:16px;height:16px;background:#d0dbe5"></div><div style="left:229px;top:550.7px;width:16px;height:16px;background:#d7e2ec"></div><div style="left:245px;top:550.7px;width:16px;height:16px;background:#d5e0ea"></div><div style="left:261px;top:550.7px;width:16px;height:16px;background:#d2dde7"></div><div style="left:277px;top:550.7px;width:16px;height:16px;background:#d1dce6"></div><div style="left:293px;top:550.7px;width:16px;height:16px;background:#d7e2ec"></div><div style="left:309px;top:550.7px;width:16px;height:16px;background:#d0dbe5"></div><div style="left:325px;top:550.7px;width:16px;height:16px;background:#d3dee8"></div><div style="left:341px;top:550.7px;width:16px;height:16px;background:#d4dfe9"></div><div style="left:357px;top:550.7px;width:16px;height:16px;background:#d2dde7"></div>
<div style="left:197px;top:566.7px;width:16px;height:16px;background:#f1f5f9"></div><div style="left:213px;top:566.7px;width:16px;height:16px;background:#eff3f7"></div><div style="left:229px;top:566.7px;width:16px;height:16px;background:#f0f4f8"></div><div style="left:245px;top:566.7px;width:16px;height:16px;background:#f0f4f8"></div><div style="left:261px;top:566.7px;width:16px;height:16px;background:#f0f4f8"></div><div style="left:277px;top:566.7px;width:16px;height:16px;background:#eff3f7"></div><div style="left:293px;top:566.7px;width:16px;height:16px;background:#eff3f7"></div><div style="left:309px;top:566.7px;width:16px;height:16px;background:#f0f4f8"></div><div style="left:325px;top:566.7px;width:16px;height:16px;background:#f0f4f8"></div><div style="left:341px;top:566.7px;width:16px;height:16px;background:#f1f5f9"></div><div style="left:357px;top:566.7px;width:16px;height:16px;background:#f0f4f8"></div>
<div style="left:197px;top:615px;width:160px;height:16px;background:#f7f9fb"></div>
<div style="left:197px;top:663px;width:160px;height:16px;background:#f7f9fb"></div>
<div style="left:197px;top:631px;width:16px;height:16px;background:#d2dde7"></div><div style="left:213px;top:631px;width:16px;height:16px;background:#d6e1eb"></div><div style="left:229px;top:631px;width:16px;height:16px;background:#d8e3ed"></div><div style="left:245px;top:631px;width:16px;height:16px;background:#d4dfe9"></div><div style="left:261px;top:631px;width:16px;height:16px;background:#d6e1eb"></div><div style="left:277px;top:631px;width:16px;height:16px;background:#d5e0ea"></div><div style="left:293px;top:631px;width:16px;height:16px;background:#d6e1eb"></div><div style="left:309px;top:631px;width:16px;height:16px;background:#d3dee8"></div><div style="left:325px;top:631px;width:16px;height:16px;background:#d2dde7"></div><div style="left:341px;top:631px;width:16px;height:16px;background:#d1dce6"></div>
<div style="left:197px;top:647px;width:16px;height:16px;background:#eff3f7"></div><div style="left:213px;top:647px;width:16px;height:16px;background:#eff3f7"></div><div style="left:229px;top:647px;width:16px;height:16px;background:#eff3f7"></div><div style="left:245px;top:647px;width:16px;height:16px;background:#f1f5f9"></div><div style="left:261px;top:647px;width:16px;height:16px;background:#eff3f7"></div><div style="left:277px;top:647px;width:16px;height:16px;background:#eff3f7"></div><div style="left:293px;top:647px;width:16px;height:16px;background:#f0f4f8"></div><div style="left:309px;top:647px;width:16px;height:16px;background:#f1f5f9"></div><div style="left:325px;top:647px;width:16px;height:16px;background:#eff3f7"></div><div style="left:341px;top:647px;width:16px;height:16px;background:#f0f4f8"></div>
<div style="left:197px;top:678.8px;width:224px;height:16px;background:#f7f9fb"></div>
<div style="left:197px;top:726.8px;width:224px;height:16px;background:#f7f9fb"></div>
<div style="left:197px;top:694.8px;width:16px;height:16px;background:#d4dfe9"></div><div style="left:213px;top:694.8px;width:16px;height:16px;background:#d0dbe5"></div><div style="left:229px;top:694.8px;width:16px;height:16px;background:#d2dde7"></div><div style="left:245px;top:694.8px;width:16px;height:16px;background:#d6e1eb"></div><div style="left:261px;top:694.8px;width:16px;height:16px;background:#d8e3ed"></div><div style="left:277px;top:694.8px;width:16px;height:16px;background:#d5e0ea"></div><div style="left:293px;top:694.8px;width:16px;height:16px;background:#d5e0ea"></div><div style="left:309px;top:694.8px;width:16px;height:16px;background:#d2dde7"></div><div style="left:325px;top:694.8px;width:16px;height:16px;background:#d8e3ed"></div><div style="left:341px;top:694.8px;width:16px;height:16px;background:#d0dbe5"></div><div style="left:357px;top:694.8px;width:16px;height:16px;background:#d7e2ec"></div><div style="left:373px;top:694.8px;width:16px;height:16px;background:#d8e3ed"></div><div style="left:389px;top:694.8px;width:16px;height:16px;background:#d6e1eb"></div><div style="left:405px;top:694.8px;width:16px;height:16px;background:#d6e1eb"></div>
<div style="left:197px;top:710.8px;width:16px;height:16px;background:#f0f4f8"></div><div style="left:213px;top:710.8px;width:16px;height:16px;background:#f0f4f8"></div><div style="left:229px;top:710.8px;width:16px;height:16px;background:#eff3f7"></div><div style="left:245px;top:710.8px;width:16px;height:16px;background:#f0f4f8"></div><div style="left:261px;top:710.8px;width:16px;height:16px;background:#f1f5f9"></div><div style="left:277px;top:710.8px;width:16px;height:16px;background:#f0f4f8"></div><div style="left:293px;top:710.8px;width:16px;height:16px;background:#eff3f7"></div><div style="left:309px;top:710.8px;width:16px;height:16px;background:#eff3f7"></div><div style="left:325px;top:710.8px;width:16px;height:16px;background:#eff3f7"></div><div style="left:341px;top:710.8px;width:16px;height:16px;background:#eff3f7"></div><div style="left:357px;top:710.8px;width:16px;height:16px;background:#f0f4f8"></div><div style="left:373px;top:710.8px;width:16px;height:16px;background:#eff3f7"></div><div style="left:389px;top:710.8px;width:16px;height:16px;background:#eff3f7"></div><div style="left:405px;top:710.8px;width:16px;height:16px;background:#f0f4f8"></div>
</div>
</body>
</html>
